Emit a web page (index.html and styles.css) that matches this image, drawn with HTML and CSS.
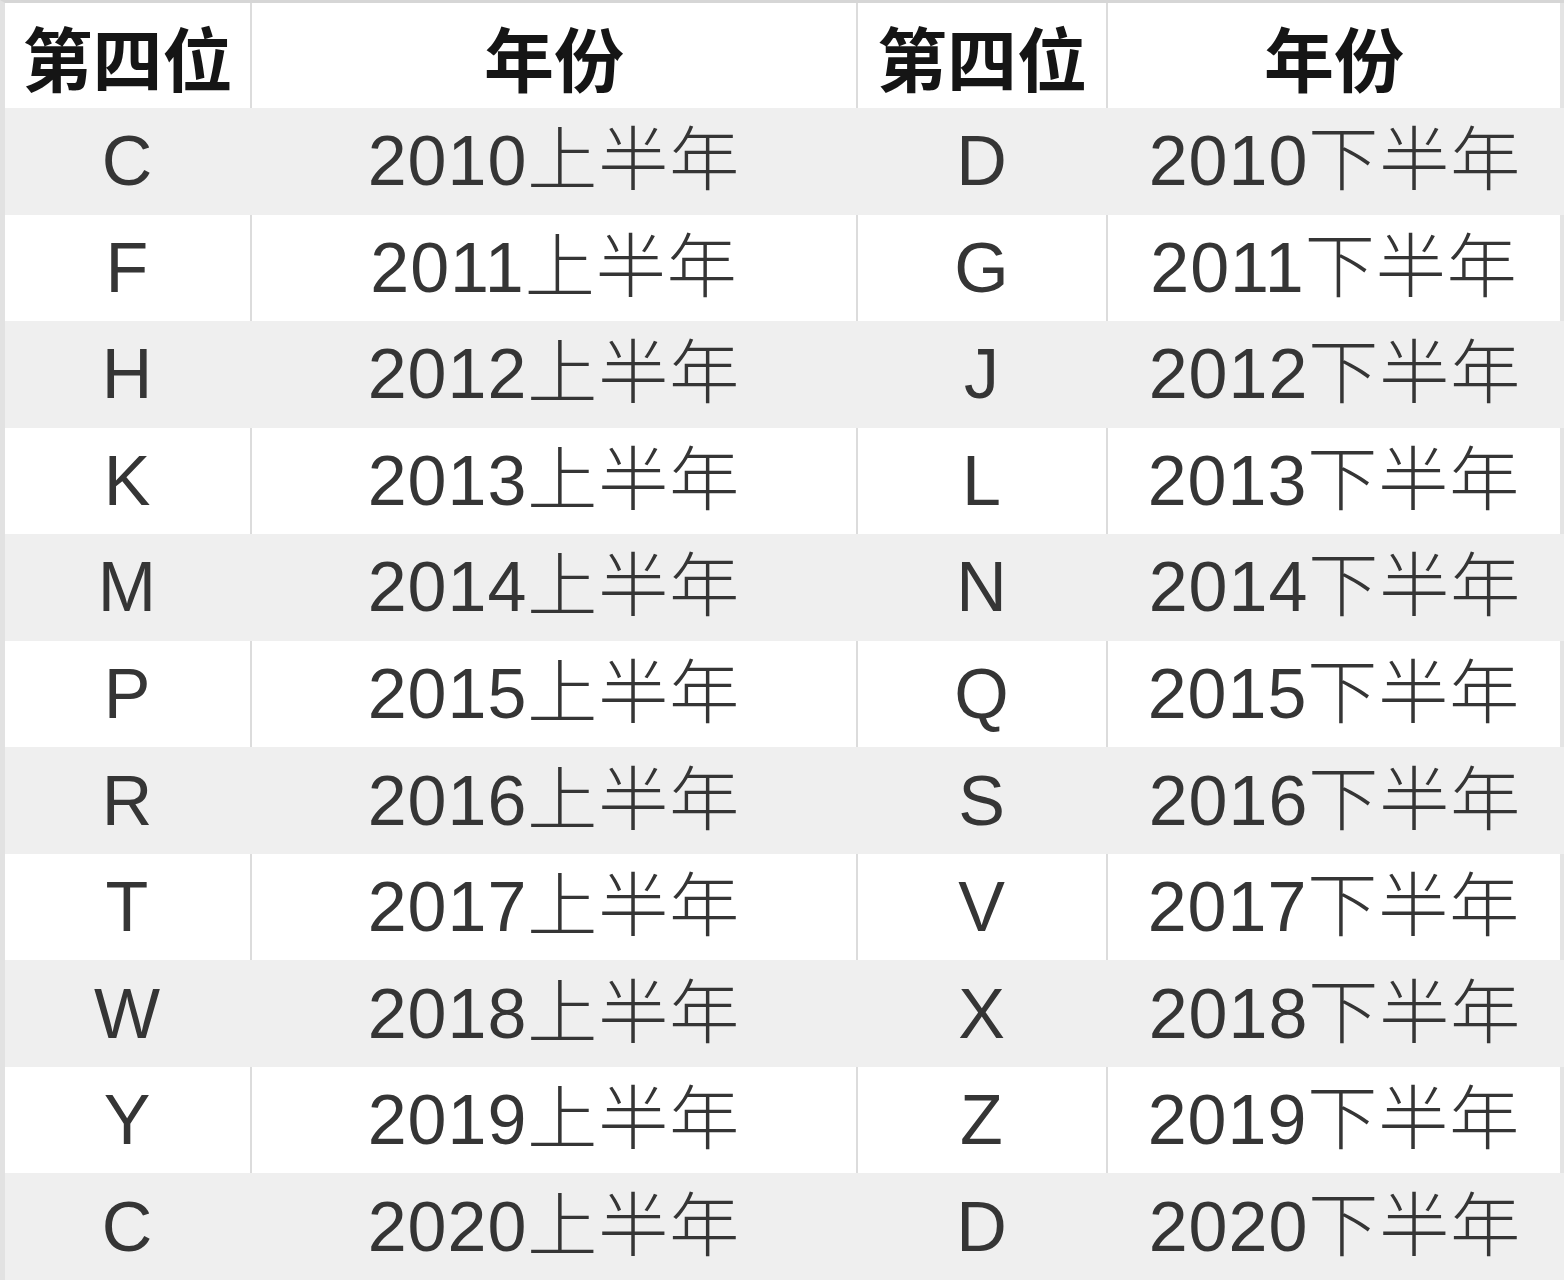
FILE: index.html
```html
<!DOCTYPE html>
<html lang="zh">
<head>
<meta charset="utf-8">
<title>第四位 年份</title>
<link rel="stylesheet" href="styles.css">
</head>
<body>
<div class="table">
  <div class="row head"><div class="cell">第四位</div><div class="cell">年份</div><div class="cell">第四位</div><div class="cell">年份</div></div>
  <div class="row shade"><div class="cell">C</div><div class="cell">2010上半年</div><div class="cell">D</div><div class="cell">2010下半年</div></div>
  <div class="row"><div class="cell">F</div><div class="cell">2011上半年</div><div class="cell">G</div><div class="cell">2011下半年</div></div>
  <div class="row shade"><div class="cell">H</div><div class="cell">2012上半年</div><div class="cell">J</div><div class="cell">2012下半年</div></div>
  <div class="row"><div class="cell">K</div><div class="cell">2013上半年</div><div class="cell">L</div><div class="cell">2013下半年</div></div>
  <div class="row shade"><div class="cell">M</div><div class="cell">2014上半年</div><div class="cell">N</div><div class="cell">2014下半年</div></div>
  <div class="row"><div class="cell">P</div><div class="cell">2015上半年</div><div class="cell">Q</div><div class="cell">2015下半年</div></div>
  <div class="row shade"><div class="cell">R</div><div class="cell">2016上半年</div><div class="cell">S</div><div class="cell">2016下半年</div></div>
  <div class="row"><div class="cell">T</div><div class="cell">2017上半年</div><div class="cell">V</div><div class="cell">2017下半年</div></div>
  <div class="row shade"><div class="cell">W</div><div class="cell">2018上半年</div><div class="cell">X</div><div class="cell">2018下半年</div></div>
  <div class="row"><div class="cell">Y</div><div class="cell">2019上半年</div><div class="cell">Z</div><div class="cell">2019下半年</div></div>
  <div class="row shade"><div class="cell">C</div><div class="cell">2020上半年</div><div class="cell">D</div><div class="cell">2020下半年</div></div>
</div>
</body>
</html>
```

FILE: styles.css
```css
html, body {
  margin: 0;
  padding: 0;
  background: #ffffff;
}
.table {
  width: 1564px;
  height: 1280px;
  display: grid;
  grid-template-rows: 105px repeat(11, 1fr);
  box-sizing: border-box;
  border-top: 3px solid #d6d6d6;
  border-left: 5px solid #e2e2e2;
  font-family: "Liberation Sans", "Noto Sans CJK SC", sans-serif;
  font-weight: 300;
  color: #353535;
  overflow: hidden;
}
.row {
  display: grid;
  grid-template-columns: 247px 606px 250px 456px;
  background: #ffffff;
}
.row.shade {
  background: #efefef;
}
.cell {
  display: flex;
  align-items: center;
  justify-content: center;
  font-size: 70px;
  line-height: 1;
  letter-spacing: 1px;
  white-space: nowrap;
  border-right: 2px solid #dcdcdc;
}
.row.shade .cell {
  border-right-color: transparent;
}
.row:not(.shade) .cell:last-child {
  border-right: 4px solid #e4e4e4;
}
.head .cell {
  font-family: "Noto Sans CJK SC", sans-serif;
  font-weight: 700;
  color: #151515;
  font-size: 70px;
  letter-spacing: 0;
  padding-top: 2px;
}
```
